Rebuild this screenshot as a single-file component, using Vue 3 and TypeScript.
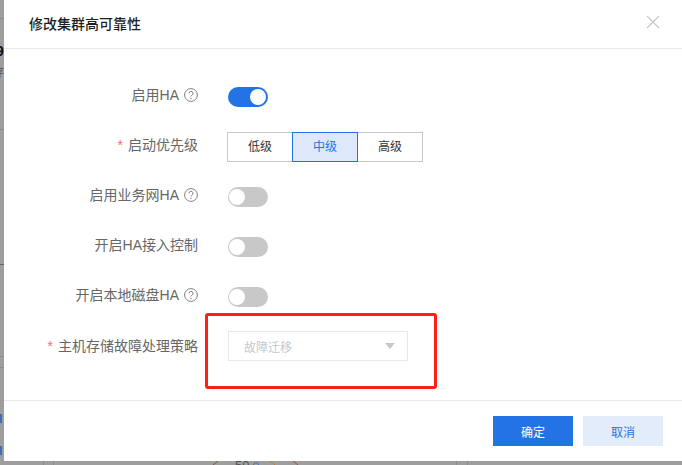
<script setup lang="ts">
interface Row {
  label: string
  help?: boolean
}
const rows: Row[] = [
  { label: '开启HA接入控制' },
  { label: '开启本地磁盘HA', help: true },
]
const levels = ['低级', '中级', '高级']
</script>

<template>
  <div class="screen">
    <div class="backdrop-bits">
      <span class="bit-nine">9</span>
      <span class="bit-char">存</span>
      <i class="bit-line l1"></i>
      <i class="bit-line l2"></i>
      <i class="bit-line l3"></i>
      <i class="bit-line l4"></i>
      <i class="bit-line l5"></i>
      <i class="bit-dot d1"></i>
      <i class="bit-dot d2"></i>
      <i class="bit-v v1"></i>
      <i class="bit-v v2"></i>
      <i class="bit-v v3"></i>
      <i class="bit-v v4"></i>
      <span class="bit-num">50</span>
      <svg class="bit-marks" width="100" height="5" viewBox="0 0 100 5">
        <path d="M13 5 18 1" stroke="#b5403c" fill="none" />
        <circle cx="56" cy="5" r="2.5" fill="none" stroke="#3f6fc0" />
        <path d="M69 0 75 5" stroke="#b9803f" fill="none" />
        <path d="M92 0 98 5" stroke="#b5403c" fill="none" />
      </svg>
    </div>
    <section class="dialog">
      <header class="head">
        <h2 class="title">修改集群高可靠性</h2>
        <svg class="close" width="14" height="14" viewBox="0 0 14 14"><path d="M1 1 13 13M13 1 1 13" stroke="#c3c8d2" stroke-width="1.2" fill="none" /></svg>
      </header>
      <div class="body">
        <div class="row">
          <div class="label">启用HA<svg class="help" width="14" height="14" viewBox="0 0 14 14"><circle cx="7" cy="7" r="6.4" fill="none" stroke="#808080" /><path d="M5 5.4A2 2 0 1 1 7.8 7.2C7.2 7.5 7 7.8 7 8.5" fill="none" stroke="#808080" /><circle cx="7" cy="10.4" r=".7" fill="#808080" /></svg></div>
          <div class="switch on"><i></i></div>
        </div>
        <div class="row">
          <div class="label"><span class="star">*</span>启动优先级</div>
          <div class="seg">
            <div v-for="(l, i) in levels" :key="l" class="seg-item" :class="{ active: i === 1 }">{{ l }}</div>
          </div>
        </div>
        <div class="row">
          <div class="label">启用业务网HA<svg class="help" width="14" height="14" viewBox="0 0 14 14"><circle cx="7" cy="7" r="6.4" fill="none" stroke="#808080" /><path d="M5 5.4A2 2 0 1 1 7.8 7.2C7.2 7.5 7 7.8 7 8.5" fill="none" stroke="#808080" /><circle cx="7" cy="10.4" r=".7" fill="#808080" /></svg></div>
          <div class="switch"><i></i></div>
        </div>
        <div v-for="r in rows" :key="r.label" class="row">
          <div class="label">{{ r.label }}<svg v-if="r.help" class="help" width="14" height="14" viewBox="0 0 14 14"><circle cx="7" cy="7" r="6.4" fill="none" stroke="#808080" /><path d="M5 5.4A2 2 0 1 1 7.8 7.2C7.2 7.5 7 7.8 7 8.5" fill="none" stroke="#808080" /><circle cx="7" cy="10.4" r=".7" fill="#808080" /></svg></div>
          <div class="switch"><i></i></div>
        </div>
        <div class="row last">
          <div class="label"><span class="star">*</span>主机存储故障处理策略</div>
          <div class="select">
            <span>故障迁移</span>
            <svg width="10" height="6" viewBox="0 0 10 6"><path d="M0 0H10L5 6Z" fill="#c3c8d2" /></svg>
          </div>
          <div class="annotation"></div>
        </div>
      </div>
      <footer class="foot">
        <button class="btn primary">确定</button>
        <button class="btn ghost">取消</button>
      </footer>
    </section>
  </div>
</template>

<style>
html, body { margin: 0; padding: 0; background: #9b9b9b; }
</style>

<style scoped>
.screen {
  position: relative;
  width: 682px;
  height: 465px;
  overflow: hidden;
  background: #9e9e9e;
  padding-left: 4px;
  box-sizing: border-box;
  font-family: "Liberation Sans", "Noto Sans CJK SC", sans-serif;
}
.backdrop-bits { position: absolute; inset: 0; }
.bit-nine { position: absolute; left: -4px; top: 43px; font: 700 14px/16px "Liberation Sans", sans-serif; color: #0b0f1a; }
.bit-char { position: absolute; left: -8px; top: 66px; font-size: 12px; line-height: 14px; color: #555; }
.bit-line { position: absolute; left: 0; width: 4px; height: 1px; background: #8c8c8c; }
.l1 { top: 18px; }
.l2 { top: 129px; }
.l3 { top: 264px; background: #666; }
.l4 { top: 356px; }
.l5 { top: 367px; }
.bit-dot { position: absolute; left: 0; width: 2px; height: 9px; background: #3f6fb0; }
.d1 { top: 414px; }
.d2 { top: 446px; }
.bit-v { position: absolute; top: 461px; width: 1px; height: 4px; background: #8c8c8c; }
.v1 { left: 43px; }
.v2 { left: 53px; }
.v3 { left: 456px; }
.v4 { left: 467px; }
.bit-num { position: absolute; left: 235px; top: 459px; font: 13px/14px "Liberation Sans", sans-serif; color: #555; }
.bit-marks { position: absolute; left: 200px; top: 460px; }
.dialog {
  position: relative;
  width: 678px;
  height: 461px;
  background: #fff;
  display: flex;
  flex-direction: column;
}
.head {
  height: 48px;
  flex: none;
  border-bottom: 1px solid #e6e8f0;
  display: flex;
  align-items: center;
  justify-content: space-between;
  padding: 0 22px 0 25px;
}
.title {
  margin: 0;
  font-size: 14px;
  font-weight: 500;
  line-height: 48px;
  color: #1f1f1f;
}
.close { margin-top: -5px; }
.body {
  flex: 1;
  padding-top: 38px;
  display: flex;
  flex-direction: column;
  gap: 30px;
}
.row {
  position: relative;
  height: 20px;
  display: flex;
  align-items: center;
}
.row.last { height: 30px; margin-top: -6px; }
.label {
  width: 194px;
  flex: none;
  display: flex;
  align-items: center;
  justify-content: flex-end;
  font-size: 14px;
  line-height: 20px;
  color: #666;
  padding-bottom: 4px;
}
.row.last .label { padding-bottom: 0; }
.help { margin-left: 5px; }
.star { color: #f56c6c; margin-right: 5px; font-size: 14px; }
.switch {
  width: 40px;
  height: 20px;
  margin-left: 30px;
  border-radius: 10px;
  background: #c8c8c8;
  position: relative;
}
.switch i {
  position: absolute;
  left: 1px;
  top: 2px;
  width: 16px;
  height: 16px;
  border-radius: 50%;
  background: #fff;
}
.switch.on { background: #2473e6; }
.switch.on i { left: 22px; }
.seg {
  margin-left: 29px;
  display: flex;
  height: 30px;
}
.seg-item {
  width: 66px;
  height: 30px;
  box-sizing: border-box;
  border: 1px solid #c8c8c8;
  font-size: 12px;
  line-height: 28px;
  text-align: center;
  color: #333;
  margin-left: -1px;
}
.seg-item:first-child { margin-left: 0; }
.seg-item.active {
  position: relative;
  background: #dde9fb;
  border-color: #2473e6;
  color: #2473e6;
}
.select {
  margin-left: 30px;
  width: 180px;
  height: 30px;
  box-sizing: border-box;
  border: 1px solid #e6e8f0;
  display: flex;
  align-items: center;
  justify-content: space-between;
  padding: 0 12px 0 15px;
  font-size: 12px;
  color: #c3c8d2;
}
.annotation {
  position: absolute;
  left: 201px;
  top: -18px;
  width: 232px;
  height: 76px;
  box-sizing: border-box;
  border: 3px solid #ff1f17;
  border-radius: 3px;
}
.foot {
  flex: none;
  height: 61px;
  border-top: 1px solid #e6e8f0;
  display: flex;
  justify-content: flex-end;
  gap: 10px;
  padding: 15px 19px 0 0;
  box-sizing: border-box;
}
.btn {
  width: 80px;
  height: 30px;
  border: 0;
  padding: 0;
  font-family: inherit;
  font-size: 12px;
}
.primary { background: #2473e6; color: #fff; }
.ghost { background: #e3ecfb; color: #2473e6; }
</style>
